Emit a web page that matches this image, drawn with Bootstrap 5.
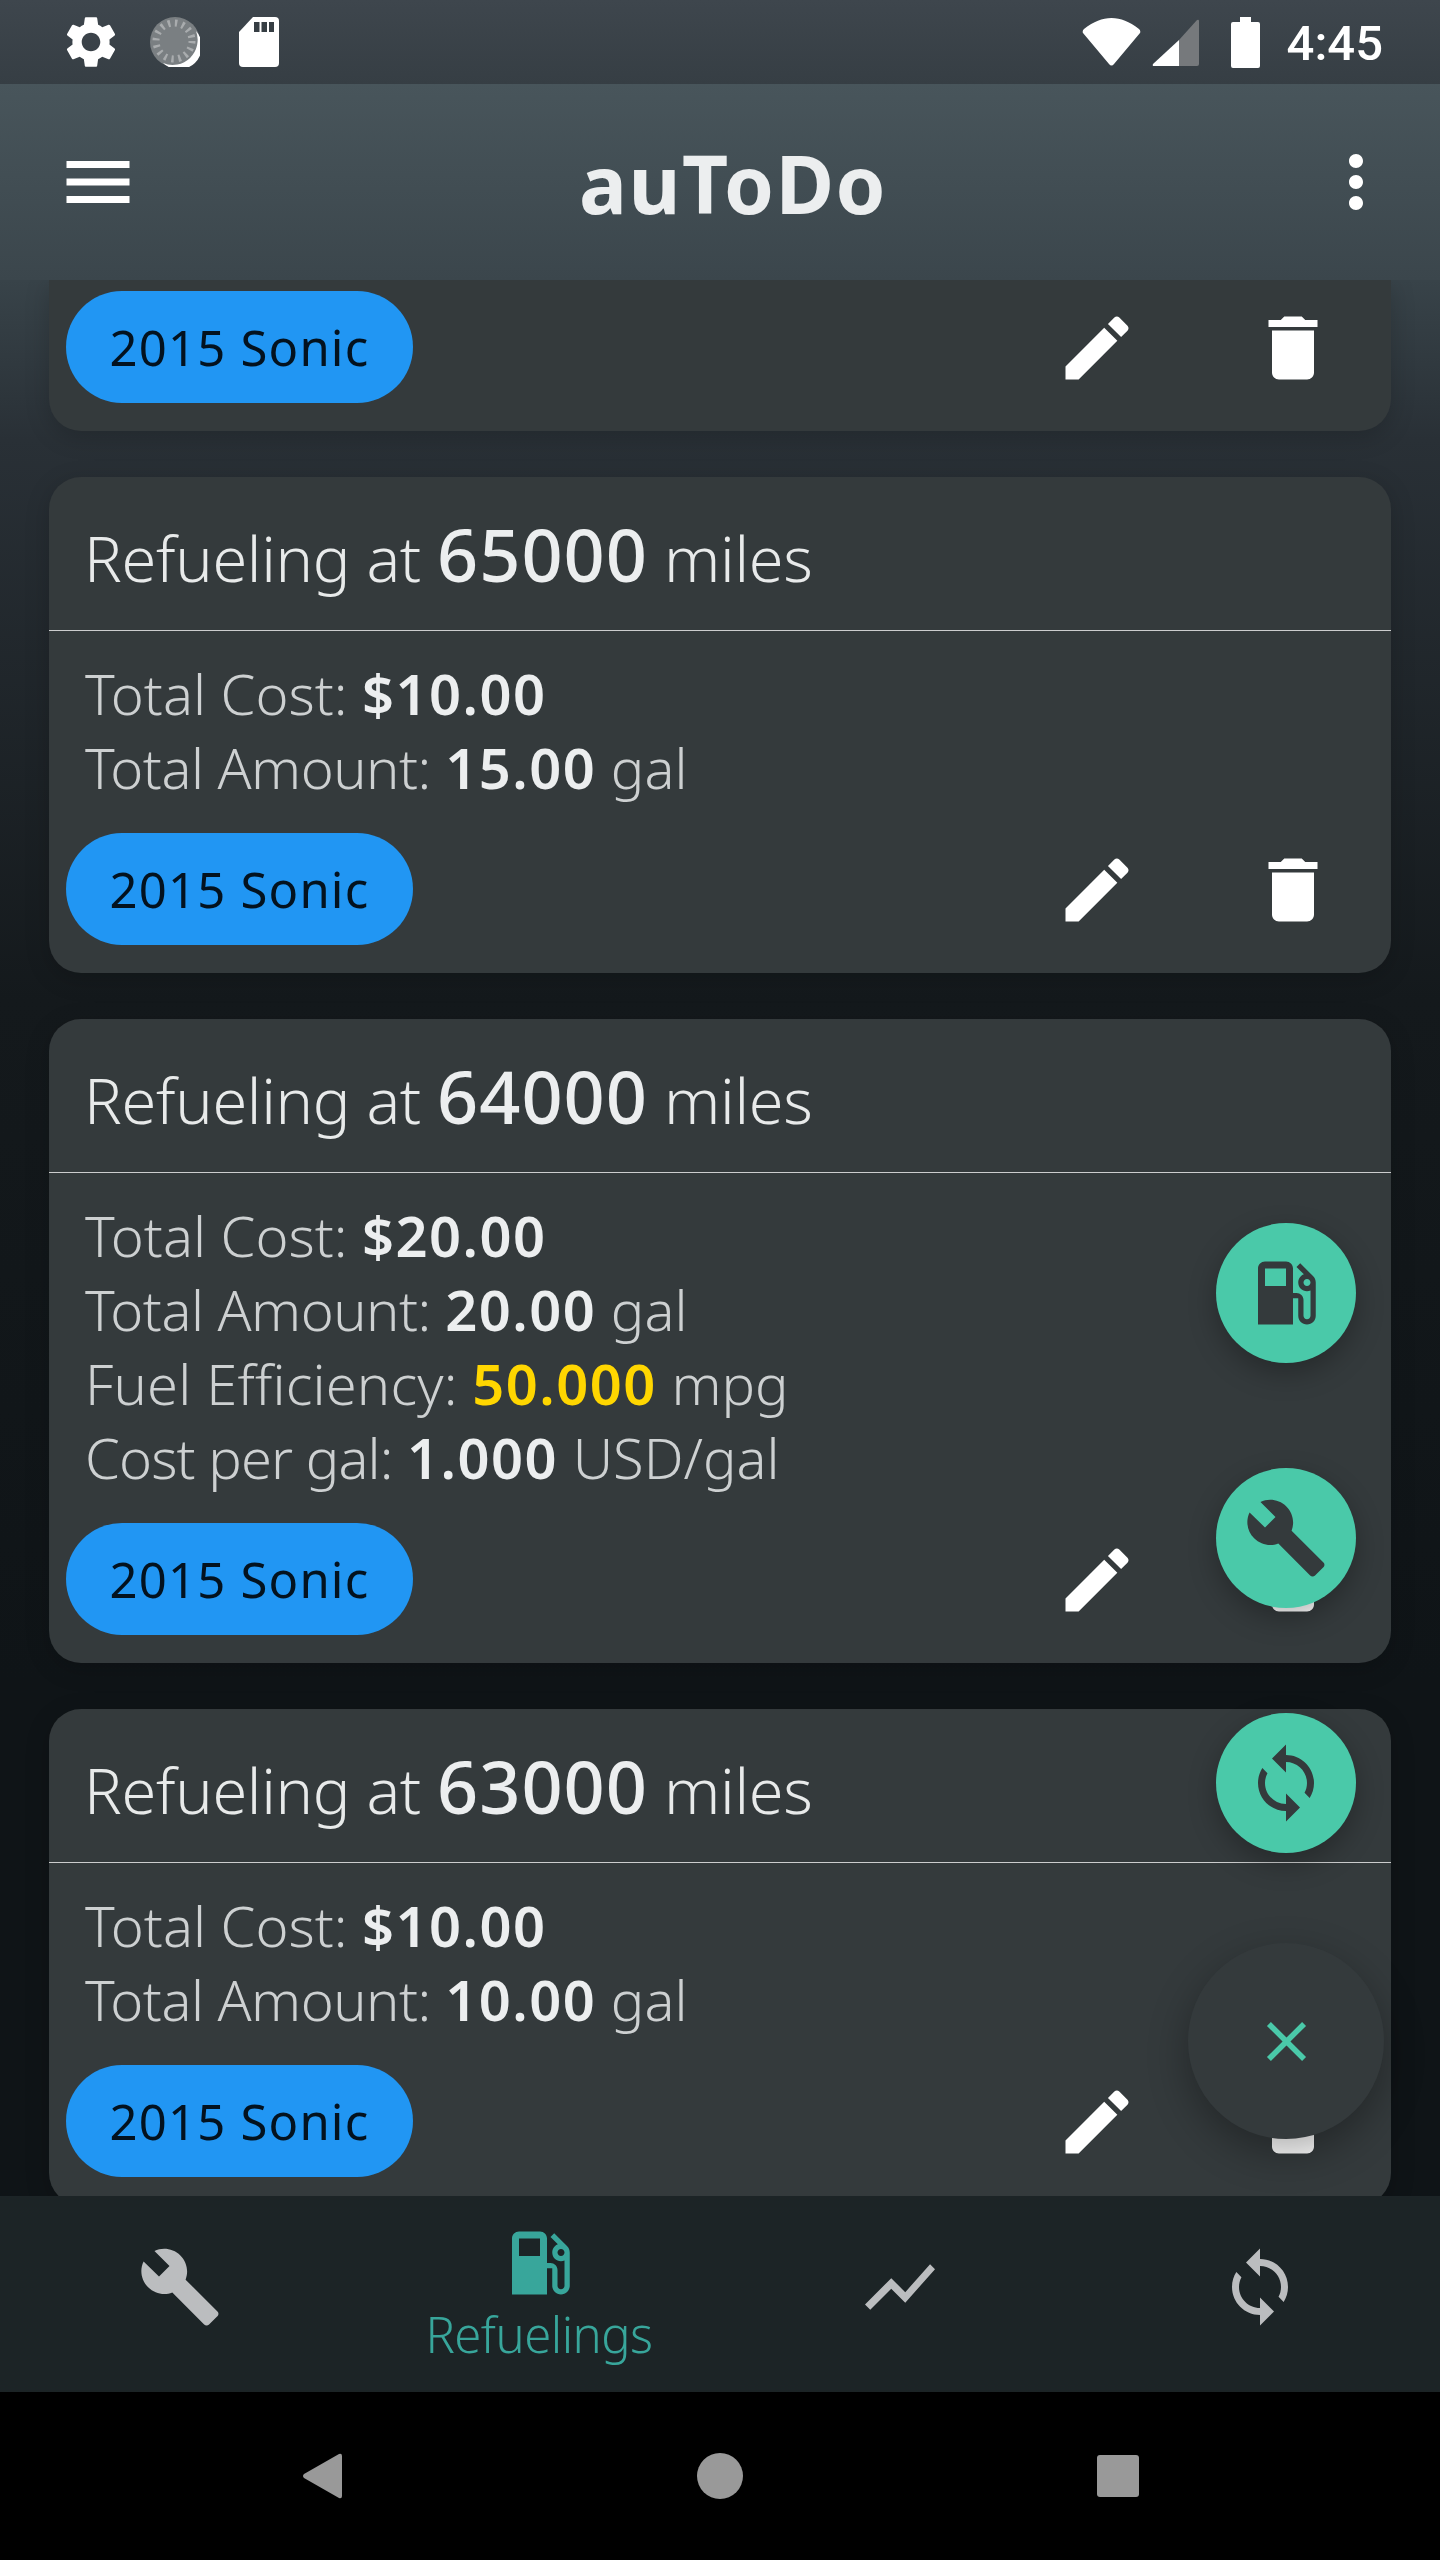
<!DOCTYPE html>
<html lang="en">
<head>
    <meta charset="UTF-8">
    <meta name="viewport" content="width=device-width, initial-scale=1.0">
    <title>auToDo</title>
    <link href="https://cdn.jsdelivr.net/npm/bootstrap@5.3.0/dist/css/bootstrap.min.css" rel="stylesheet">
    <style>
        body {
            margin: 0;
            background-color: #000;
            font-family: "Noto Sans", sans-serif;
        }
        .phone {
            position: relative;
            width: 1440px;
            height: 2560px;
            overflow: hidden;
        }
        .status-bar {
            height: 84px;
            padding: 0 57px 0 60px;
            background: linear-gradient(#3e464d, #363e44);
            color: #fff;
        }
        .clock {
            font-family: Roboto, sans-serif;
            font-size: 49px;
            font-weight: 500;
            line-height: 1;
            margin-left: 27px;
            margin-top: 2px;
        }
        .app-bar {
            height: 196px;
            padding: 0 42px 0 56px;
            background: linear-gradient(#48555b, #3b464c);
        }
        .app-title {
            font-family: "Noto Sans", sans-serif;
            font-weight: 700;
            font-size: 80px;
            letter-spacing: 1.500px;
            line-height: 1;
            color: #eceeef;
            padding-left: 12px;
            margin-top: 2px;
        }
        .card-list {
            height: 1916px;
            overflow: hidden;
            padding: 0 49px;
            background: linear-gradient(#384349 0, #293036 160px, #14191c 720px, #0f1417 1400px);
        }
        .fuel-card {
            --bs-card-bg: #343a3c;
            --bs-card-border-width: 0;
            --bs-card-border-radius: 32px;
            --bs-card-inner-border-radius: 32px;
            margin-bottom: 46px;
            box-shadow: 0 6px 24px rgba(0, 0, 0, .18);
        }
        .fuel-card.scrolled-off {
            border-top-left-radius: 0;
            border-top-right-radius: 0;
            padding-top: 11px;
        }
        .fuel-card .card-header {
            height: 154px;
            padding: 0 0 0 35px;
            background: none;
            border-bottom: 1px solid rgba(255, 255, 255, .75);
            border-radius: 32px 32px 0 0;
            font-size: 63px;
            font-weight: 300;
            letter-spacing: -.3px;
            color: #e8eaea;
            line-height: 155px;
        }
        .fuel-card .card-header b {
            font-size: 72px;
            font-weight: 500;
            letter-spacing: 1px;
            color: #eceeef;
        }
        .fuel-card .card-body {
            padding: 25px 36px 0;
            font-size: 56px;
            line-height: 74px;
            font-weight: 300;
            color: #cdd0d1;
        }
        .fuel-card .card-body b {
            font-weight: 600;
            letter-spacing: 1.500px;
            color: #eceeef;
        }
        .fuel-card .card-body b.good {
            color: #ffd600;
        }
        /* os rótulos ficam com a mesma largura do original */
        .lbl-amount { letter-spacing: -.5px; }
        .lbl-fuel { letter-spacing: .2px; }
        .lbl-price { letter-spacing: -.9px; }
        .card-actions {
            margin-top: 29px;
            padding: 0 0 28px 17px;
        }
        .fuel-card.scrolled-off .card-actions {
            margin-top: 0;
        }
        .car-chip {
            width: 347px;
            height: 112px;
            line-height: 112px;
            padding: 0;
            font-size: 49px;
            font-weight: 400;
            letter-spacing: 1.200px;
            color: #03121f;
            background-color: #2196f3;
        }
        .act-btn {
            width: 196px;
            height: 112px;
            padding: 2px 0 0;
            border: 0;
            color: #fff;
        }
        .fab-stack {
            position: absolute;
            left: 1216px;
            top: 1223px;
            width: 140px;
        }
        .mini-fab {
            width: 140px;
            height: 140px;
            padding: 0;
            margin-bottom: 105px;
            border: 0;
            border-radius: 50%;
            background-color: #4ac9a9;
            color: #343a3c;
            box-shadow: 0 10px 28px rgba(0, 0, 0, .28);
        }
        .main-fab {
            position: absolute;
            left: 1188px;
            top: 1943px;
            width: 196px;
            height: 196px;
            padding: 0;
            border: 0;
            border-radius: 50%;
            background-color: #343a3c;
            color: #4ac9a9;
            box-shadow: 0 14px 40px rgba(0, 0, 0, .32);
        }
        .bottom-nav {
            height: 196px;
            background-color: #1c2426;
        }
        .nav-slot {
            width: 360px;
            padding-top: 49px;
            color: #bbbdbf;
        }
        .nav-slot.active-slot {
            padding-top: 25px;
            color: #38a69b;
        }
        .nav-label {
            font-size: 49px;
            font-weight: 300;
            letter-spacing: -.5px;
            line-height: 1;
            margin-top: 5px;
            margin-right: 2px;
        }
        .system-nav {
            height: 168px;
            background-color: #000;
            gap: 352px;
        }
        .ico {
            width: 84px;
            height: 84px;
            fill: currentColor;
            display: block;
        }
        .ico-gear {
            width: 62px;
            height: 62px;
            fill: #fff;
        }
        .ico-disk {
            margin-left: 28px;
        }
        .ico-sd {
            margin-left: 39px;
        }
        .ico-signal {
            margin-left: 11px;
        }
        .ico-battery {
            margin-left: 32px;
        }
        .ico-close {
            width: 67px;
            height: 67px;
        }
    </style>
</head>
<body>
    <svg width="0" height="0" class="d-none">
        <symbol id="i-menu" viewBox="0 0 24 24"><path d="M3 18h18v-2H3v2zm0-5h18v-2H3v2zm0-7v2h18V6H3z"/></symbol>
        <symbol id="i-more" viewBox="0 0 24 24"><path d="M12 8c1.1 0 2-.9 2-2s-.9-2-2-2-2 .9-2 2 .9 2 2 2zm0 2c-1.1 0-2 .9-2 2s.9 2 2 2 2-.9 2-2-.9-2-2-2zm0 6c-1.1 0-2 .9-2 2s.9 2 2 2 2-.9 2-2-.9-2-2-2z"/></symbol>
        <symbol id="i-edit" viewBox="0 0 24 24"><path d="M3 17.25V21h3.75L17.81 9.94l-3.75-3.75L3 17.25zM20.71 7.04c.39-.39.39-1.02 0-1.41l-2.34-2.34c-.39-.39-1.02-.39-1.41 0l-1.83 1.83 3.75 3.75 1.83-1.83z"/></symbol>
        <symbol id="i-delete" viewBox="0 0 24 24"><path d="M6 19c0 1.1.9 2 2 2h8c1.1 0 2-.9 2-2V7H6v12zM19 4h-3.5l-1-1h-5l-1 1H5v2h14V4z"/></symbol>
        <symbol id="i-build" viewBox="0 0 24 24"><path d="M22.7 19l-9.1-9.1c.9-2.3.4-5-1.5-6.9-2-2-5-2.4-7.4-1.3L9 6 6 9 1.6 4.7C.4 7.1.9 10.1 2.9 12.1c1.9 1.9 4.6 2.4 6.9 1.5l9.1 9.1c.4.4 1 .4 1.4 0l2.3-2.3c.5-.4.5-1.1.1-1.4z"/></symbol>
        <symbol id="i-fuel" viewBox="0 0 24 24"><path d="M19.77 7.23l.01-.01-3.72-3.72L15 4.56l2.11 2.11c-.94.36-1.61 1.26-1.61 2.33 0 1.38 1.12 2.5 2.5 2.5.36 0 .69-.08 1-.21v7.21c0 .55-.45 1-1 1s-1-.45-1-1V14c0-1.1-.9-2-2-2h-1V5c0-1.1-.9-2-2-2H6c-1.1 0-2 .9-2 2v16h10v-7.5h1.5v5c0 1.38 1.12 2.5 2.5 2.5s2.5-1.12 2.5-2.5V9c0-.69-.28-1.32-.73-1.77zM12 10H6V5h6v5zm6 0c-.55 0-1-.45-1-1s.45-1 1-1 1 .45 1 1-.45 1-1 1z"/></symbol>
        <symbol id="i-sync" viewBox="0 0 24 24"><path d="M12 4V1L8 5l4 4V6c3.31 0 6 2.69 6 6 0 1.01-.25 1.97-.7 2.8l1.46 1.46C19.54 15.03 20 13.57 20 12c0-4.42-3.58-8-8-8zm0 14c-3.31 0-6-2.69-6-6 0-1.01.25-1.97.7-2.8L5.24 7.74C4.46 8.97 4 10.43 4 12c0 4.42 3.58 8 8 8v3l4-4-4-4v3z"/></symbol>
        <symbol id="i-chart" viewBox="0 0 24 24"><path d="M3.5 18.49l6-6.01 4 4L22 6.92l-1.41-1.41-7.09 7.97-4-4L2 16.99z"/></symbol>
        <symbol id="i-close" viewBox="0 0 24 24"><path d="M19 6.41L17.59 5 12 10.59 6.41 5 5 6.41 10.59 12 5 17.59 6.41 19 12 13.41 17.59 19 19 17.59 13.41 12z"/></symbol>
    </svg>

    <div class="phone d-flex flex-column">
        <!-- barra de status -->
        <div class="status-bar d-flex align-items-center flex-shrink-0">
            <svg class="ico-gear" viewBox="0 0 24 24"><path d="M19.14 12.94c.04-.3.06-.61.06-.94 0-.32-.02-.64-.07-.94l2.03-1.58c.18-.14.23-.41.12-.61l-1.92-3.32c-.12-.22-.37-.29-.59-.22l-2.39.96c-.5-.38-1.03-.7-1.62-.94l-.36-2.54c-.04-.24-.24-.41-.48-.41h-3.84c-.24 0-.43.17-.47.41l-.36 2.54c-.59.24-1.13.57-1.62.94l-2.39-.96c-.22-.08-.47 0-.59.22L2.74 8.87c-.12.21-.08.47.12.61l2.03 1.58c-.05.3-.09.63-.09.94s.02.64.07.94l-2.03 1.58c-.18.14-.23.41-.12.61l1.92 3.32c.12.22.37.29.59.22l2.39-.96c.5.38 1.03.7 1.62.94l.36 2.54c.05.24.24.41.48.41h3.84c.24 0 .44-.17.47-.41l.36-2.54c.59-.24 1.13-.56 1.62-.94l2.39.96c.22.08.47 0 .59-.22l1.92-3.32c.12-.22.07-.47-.12-.61l-2.01-1.58zM12 15.6c-1.98 0-3.6-1.62-3.6-3.6s1.62-3.6 3.6-3.6 3.6 1.62 3.6 3.6-1.62 3.6-3.6 3.6z"/></svg>
            <svg class="ico-disk" width="50" height="50" viewBox="0 0 50 50">
                <circle cx="25" cy="25" r="25" fill="#7a7f82"/>
                <circle cx="24" cy="24" r="18" fill="none" stroke="#a9acae" stroke-width="7" stroke-dasharray="2.4 4.7"/>
                <path d="M46 14A23 23 0 0 1 13 46 25 25 0 0 0 46 14z" fill="#fff"/>
            </svg>
            <svg class="ico-sd" width="40" height="50" viewBox="0 0 40 50">
                <path d="M14 0H36Q40 0 40 4V46Q40 50 36 50H4Q0 50 0 46V15z" fill="#fff"/>
                <path d="M15 5h5.500v10H15zM22.500 5H28v10h-5.500zM30 5h5v10h-5z" fill="#363e44"/>
            </svg>
            <div class="flex-grow-1"></div>
            <svg width="59" height="48" viewBox="0 0 59 48">
                <path d="M2 11C12 3.500 20 0 29.500 0S47 3.500 57 11Q59 13 58 15L32 46Q29.500 49 27 46L1 15Q0 13 2 11z" fill="#fff"/>
            </svg>
            <svg class="ico-signal" width="47" height="47" viewBox="0 0 47 47">
                <path d="M27 21V47H2Q0 47 1 45z" fill="#fff"/>
                <path d="M27 21 45 1Q47 0 47 2V45Q47 47 45 47H27z" fill="#76797c"/>
            </svg>
            <svg class="ico-battery" width="29" height="51" viewBox="0 0 29 51">
                <path d="M9 0H20V5H27Q29 5 29 7V49Q29 51 27 51H2Q0 51 0 49V7Q0 5 2 5H9z" fill="#fff"/>
            </svg>
            <span class="clock">4:45</span>
        </div>

        <!-- app bar -->
        <div class="app-bar d-flex align-items-center flex-shrink-0 text-white">
            <svg class="ico"><use href="#i-menu"/></svg>
            <div class="app-title flex-grow-1 text-center">auToDo</div>
            <svg class="ico"><use href="#i-more"/></svg>
        </div>

        <!-- lista de abastecimentos -->
        <div class="card-list flex-shrink-0" id="refuelList"></div>

        <!-- navegação inferior -->
        <div class="bottom-nav d-flex flex-shrink-0">
            <div class="nav-slot d-flex flex-column align-items-center"><svg class="ico"><use href="#i-build"/></svg></div>
            <div class="nav-slot active-slot d-flex flex-column align-items-center">
                <svg class="ico"><use href="#i-fuel"/></svg>
                <span class="nav-label">Refuelings</span>
            </div>
            <div class="nav-slot d-flex flex-column align-items-center"><svg class="ico"><use href="#i-chart"/></svg></div>
            <div class="nav-slot d-flex flex-column align-items-center"><svg class="ico"><use href="#i-sync"/></svg></div>
        </div>

        <!-- navegação do sistema -->
        <div class="system-nav d-flex align-items-center justify-content-center flex-shrink-0">
            <svg width="46" height="46" viewBox="0 0 46 46"><path d="M40 1Q43 0 43 3V43Q43 46 40 45L5 25Q3 23 5 21z" fill="#999"/></svg>
            <svg width="46" height="46" viewBox="0 0 46 46"><circle cx="23" cy="23" r="23" fill="#999"/></svg>
            <svg width="46" height="46" viewBox="0 0 46 46"><rect x="2" y="2" width="42" height="42" rx="3" fill="#999"/></svg>
        </div>

        <!-- botões flutuantes -->
        <div class="fab-stack">
            <button class="btn mini-fab d-flex align-items-center justify-content-center"><svg class="ico"><use href="#i-fuel"/></svg></button>
            <button class="btn mini-fab d-flex align-items-center justify-content-center"><svg class="ico"><use href="#i-build"/></svg></button>
            <button class="btn mini-fab d-flex align-items-center justify-content-center"><svg class="ico"><use href="#i-sync"/></svg></button>
        </div>
        <button class="btn main-fab d-flex align-items-center justify-content-center"><svg class="ico ico-close"><use href="#i-close"/></svg></button>
    </div>

    <script src="https://cdn.jsdelivr.net/npm/bootstrap@5.3.0/dist/js/bootstrap.bundle.min.js"></script>
    <script>
        // o primeiro cartão está rolado para fora, só os botões aparecem
        const refuelings = [
            { odom: 65000, lines: [['lbl-cost', 'Total Cost:', '<b>$10.00</b>'], ['lbl-amount', 'Total Amount:', '<b>15.00</b> gal']] },
            { odom: 64000, lines: [['lbl-cost', 'Total Cost:', '<b>$20.00</b>'], ['lbl-amount', 'Total Amount:', '<b>20.00</b> gal'], ['lbl-fuel', 'Fuel Efficiency:', '<b class="good">50.000</b> mpg'], ['lbl-price', 'Cost per gal:', '<b>1.000</b> USD/gal']] },
            { odom: 63000, lines: [['lbl-cost', 'Total Cost:', '<b>$10.00</b>'], ['lbl-amount', 'Total Amount:', '<b>10.00</b> gal']] }
        ];

        function actionsRow() {
            return `
                <div class="card-actions d-flex align-items-center justify-content-between">
                    <span class="badge rounded-pill car-chip">2015 Sonic</span>
                    <div class="d-flex">
                        <button class="btn act-btn d-flex align-items-center justify-content-center"><svg class="ico"><use href="#i-edit"/></svg></button>
                        <button class="btn act-btn d-flex align-items-center justify-content-center"><svg class="ico"><use href="#i-delete"/></svg></button>
                    </div>
                </div>`;
        }

        const list = document.getElementById('refuelList');
        list.innerHTML = `<div class="card fuel-card scrolled-off">${actionsRow()}</div>`;
        refuelings.forEach(item => {
            const rows = item.lines.map(([cls, label, value]) => `<div><span class="${cls}">${label}</span> ${value}</div>`).join('');
            list.innerHTML += `
                <div class="card fuel-card">
                    <div class="card-header">Refueling at <b>${item.odom}</b> miles</div>
                    <div class="card-body">${rows}</div>
                    ${actionsRow()}
                </div>`;
        });
    </script>
</body>
</html>
